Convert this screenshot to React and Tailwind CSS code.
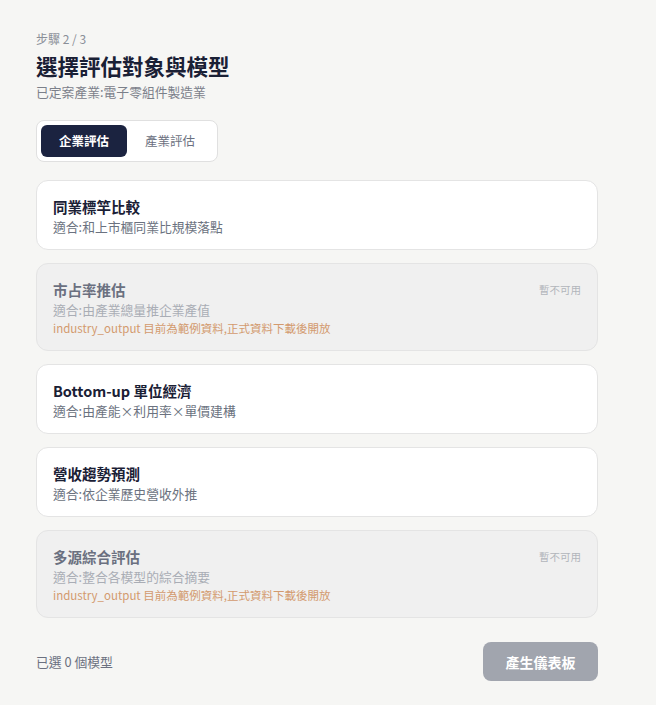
import { useState } from "react"

const MODELS = [
  { id: "peer", title: "同業標竿比較", desc: "適合:和上市櫃同業比規模落點", available: true },
  { id: "share", title: "市占率推估", desc: "適合:由產業總量推企業產值", available: false },
  { id: "bottomup", title: "Bottom-up 單位經濟", desc: "適合:由產能×利用率×單價建構", available: true },
  { id: "trend", title: "營收趨勢預測", desc: "適合:依企業歷史營收外推", available: true },
  { id: "multi", title: "多源綜合評估", desc: "適合:整合各模型的綜合摘要", available: false },
]

const SAMPLE_NOTE = "industry_output 目前為範例資料,正式資料下載後開放"

const ModelCard = ({ model }) => {
  if (!model.available) {
    return (
      <div className="rounded-xl border border-[#e4e4e4] bg-[#f0f0f0] px-4 pt-4 pb-[13px]">
        <div className="flex h-5 items-start justify-between">
          <h3 className="text-[14.5px] font-bold leading-5 text-[#6b7080]">{model.title}</h3>
          <span className="mt-0.5 text-[10.5px] leading-4 text-[#b2b5bb]">暫不可用</span>
        </div>
        <p className="mt-[1px] h-[18px] text-[12.8px] leading-[18px] text-[#a9adb5]">{model.desc}</p>
        <p className="h-[18px] text-[11.5px] leading-[18px] text-[#d39a6e]">{SAMPLE_NOTE}</p>
      </div>
    )
  }

  return (
    <button
      type="button"
      className="block w-full rounded-xl border border-[#e4e4e4] bg-white px-4 pt-4 pb-[13px] text-left"
    >
      <h3 className="h-5 text-[14.5px] font-bold leading-5 text-[#1a2035]">{model.title}</h3>
      <p className="mt-[1px] h-[18px] text-[12.8px] leading-[18px] text-[#6b7280]">{model.desc}</p>
    </button>
  )
}

export default function App() {
  const [tab, setTab] = useState("company")
  const [selected] = useState([])

  return (
    <div
      className="min-h-[705px] bg-[#f6f6f4] px-9 pt-[30px] pb-6"
      style={{ fontFamily: '"Noto Sans CJK TC", "Noto Sans", sans-serif' }}
    >
      <div className="w-[562px]">
        <p className="text-xs leading-[18px] text-[#8a8f98]">步驟 2 / 3</p>
        <h1 className="mt-[4px] text-[21.5px] font-bold leading-7 text-[#1a2035]">選擇評估對象與模型</h1>
        <p className="mt-[3px] text-[12.8px] leading-[18px] text-[#7b808a]">已定案產業:電子零組件製造業</p>

        <div className="mt-[19px] flex">
          <div className="flex rounded-lg border border-[#e0e0e0] bg-white p-1">
            {[
              { key: "company", label: "企業評估" },
              { key: "industry", label: "產業評估" },
            ].map((t) => (
              <button
                key={t.key}
                type="button"
                onClick={() => setTab(t.key)}
                className={`h-8 w-[86px] rounded-md text-[12.5px] ${
                  tab === t.key ? "bg-[#1b2340] font-bold text-white" : "text-[#6b7080]"
                }`}
              >
                {t.label}
              </button>
            ))}
          </div>
        </div>

        <div className="mt-[18px] flex flex-col gap-[13px]">
          {MODELS.map((m) => (
            <ModelCard key={m.id} model={m} />
          ))}
        </div>

        <div className="mt-6 flex items-center justify-between">
          <span className="text-[12.8px] text-[#6b7080]">已選 {selected.length} 個模型</span>
          <button
            type="button"
            disabled
            className="h-[39px] w-[115px] rounded-lg bg-[#a1a5ae] text-sm font-bold text-white"
          >
            產生儀表板
          </button>
        </div>
      </div>
    </div>
  )
}
